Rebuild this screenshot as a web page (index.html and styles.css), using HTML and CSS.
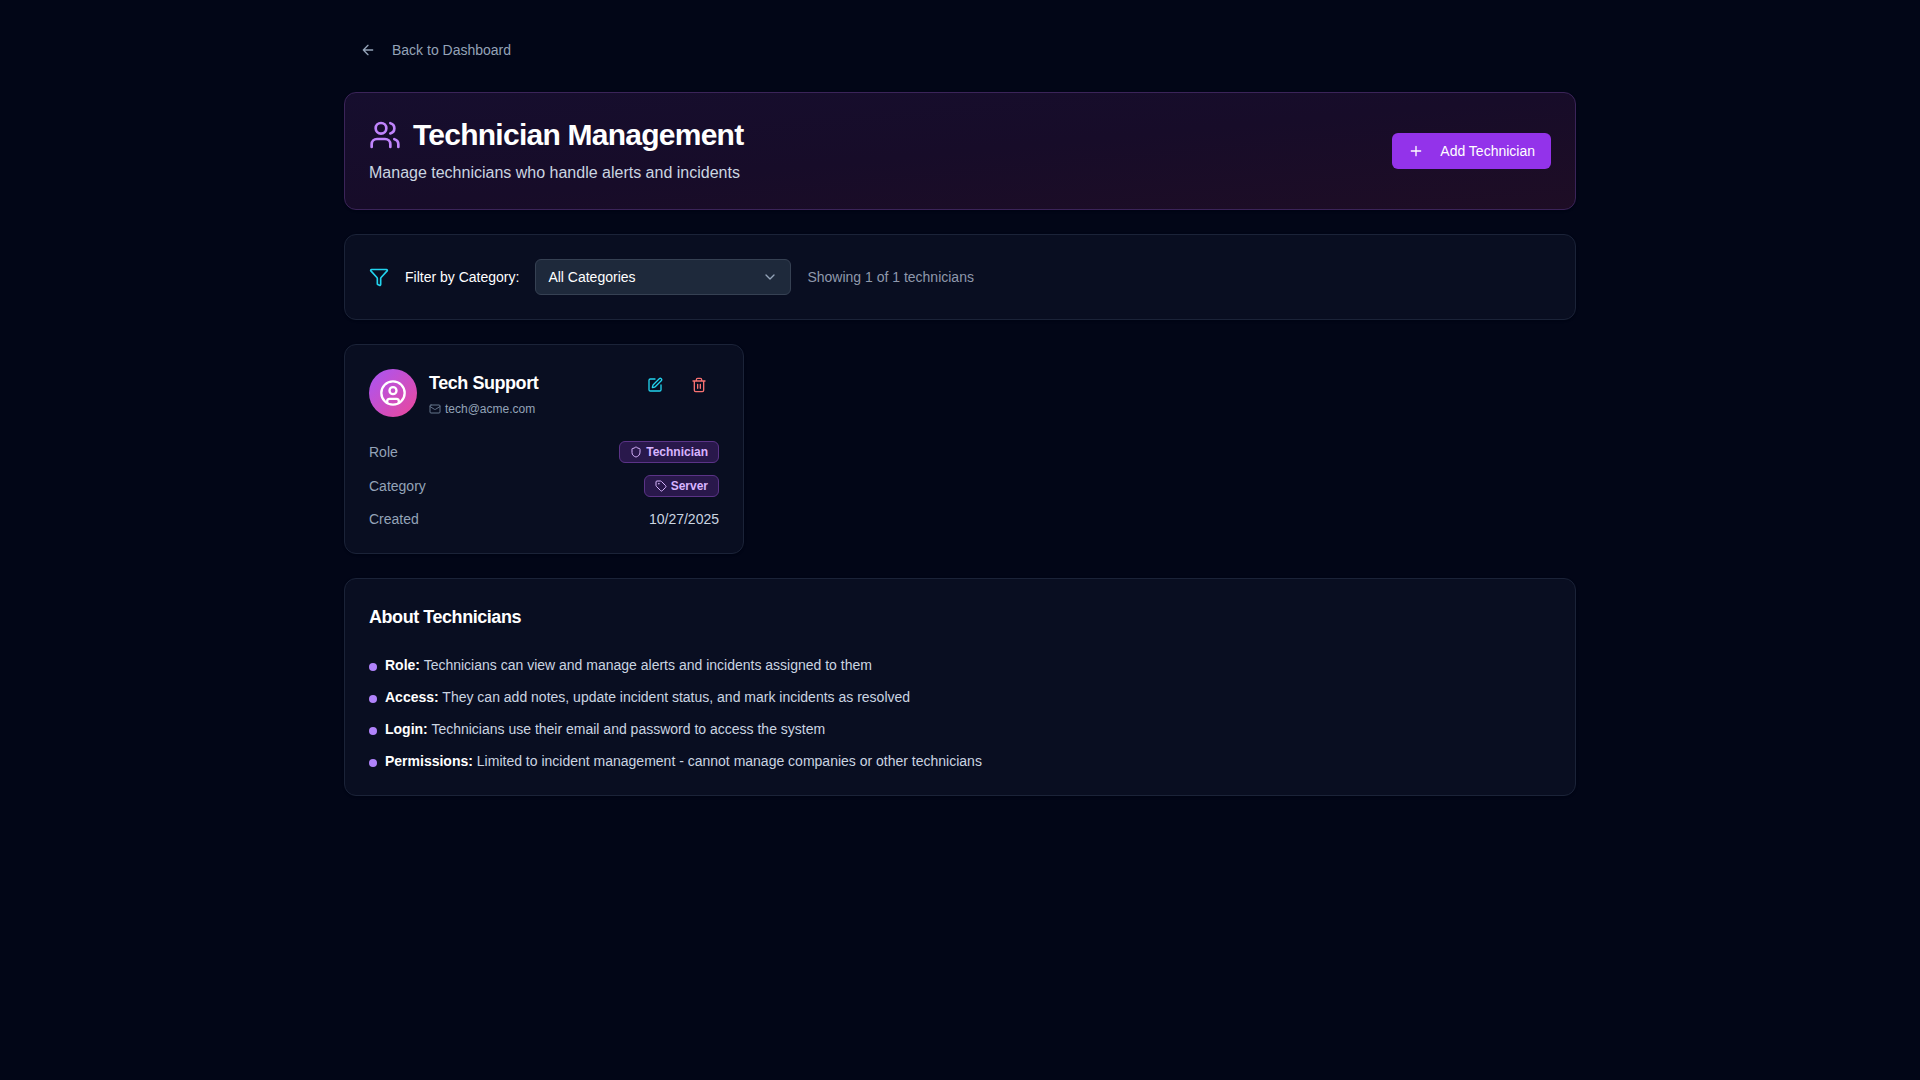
FILE: index.html
```html
<!DOCTYPE html>
<html lang="en">
<head>
<meta charset="utf-8">
<title>Technician Management</title>
<link rel="stylesheet" href="styles.css">
</head>
<body>
<main class="page">
  <a class="btn back"><svg class="i16" viewBox="0 0 24 24"><path d="m12 19-7-7 7-7M19 12H5"/></svg>Back to Dashboard</a>

  <header class="card hero">
    <div>
      <h1><svg class="i32" viewBox="0 0 24 24"><path d="M16 21v-2a4 4 0 0 0-4-4H6a4 4 0 0 0-4 4v2"/><circle cx="9" cy="7" r="4"/><path d="M22 21v-2a4 4 0 0 0-3-3.87M16 3.13a4 4 0 0 1 0 7.75"/></svg>Technician Management</h1>
      <p>Manage technicians who handle alerts and incidents</p>
    </div>
    <button class="btn add"><svg class="i16" viewBox="0 0 24 24"><path d="M5 12h14M12 5v14"/></svg>Add Technician</button>
  </header>

  <section class="card filter">
    <svg class="i20 cyan" viewBox="0 0 24 24"><path d="M10 20a1 1 0 0 0 .553.895l2 1A1 1 0 0 0 14 21v-7a2 2 0 0 1 .517-1.341L21.74 4.67A1 1 0 0 0 21 3H3a1 1 0 0 0-.742 1.67l7.225 7.989A2 2 0 0 1 10 14z"/></svg>
    <span class="label">Filter by Category:</span>
    <div class="select">All Categories<svg class="i16" viewBox="0 0 24 24"><path d="m6 9 6 6 6-6"/></svg></div>
    <span class="count">Showing 1 of 1 technicians</span>
  </section>

  <section class="grid">
    <article class="card">
      <div class="person">
        <div class="avatar"><svg class="i28" viewBox="0 0 24 24"><circle cx="12" cy="12" r="10"/><circle cx="12" cy="10" r="3"/><path d="M7 20.662V19a2 2 0 0 1 2-2h6a2 2 0 0 1 2 2v1.662"/></svg></div>
        <div class="who">
          <h2>Tech Support</h2>
          <div class="mail"><svg class="i12" viewBox="0 0 24 24"><rect x="2" y="4" width="20" height="16" rx="2"/><path d="m22 7-8.97 5.7a1.94 1.94 0 0 1-2.06 0L2 7"/></svg>tech@acme.com</div>
        </div>
        <div class="actions">
          <button class="icon-btn cyan"><svg class="i16" viewBox="0 0 24 24"><path d="M12 3H5a2 2 0 0 0-2 2v14a2 2 0 0 0 2 2h14a2 2 0 0 0 2-2v-7"/><path d="M18.375 2.625a1 1 0 0 1 3 3l-9.013 9.014a2 2 0 0 1-.853.505l-2.873.84a.5.5 0 0 1-.62-.62l.84-2.873a2 2 0 0 1 .506-.852z"/></svg></button>
          <button class="icon-btn red"><svg class="i16" viewBox="0 0 24 24"><path d="M3 6h18M19 6v14a2 2 0 0 1-2 2H7a2 2 0 0 1-2-2V6M8 6V4a2 2 0 0 1 2-2h4a2 2 0 0 1 2 2v2M10 11v6M14 11v6"/></svg></button>
        </div>
      </div>
      <dl class="facts">
        <div><dt>Role</dt><dd class="badge"><svg class="i12" viewBox="0 0 24 24"><path d="M20 13c0 5-3.5 7.5-7.66 8.95a1 1 0 0 1-.67-.01C7.5 20.5 4 18 4 13V6a1 1 0 0 1 1-1c2 0 4.5-1.2 6.24-2.72a1.17 1.17 0 0 1 1.52 0C14.51 3.81 17 5 19 5a1 1 0 0 1 1 1z"/></svg>Technician</dd></div>
        <div><dt>Category</dt><dd class="badge"><svg class="i12" viewBox="0 0 24 24"><path d="M12.586 2.586A2 2 0 0 0 11.172 2H4a2 2 0 0 0-2 2v7.172a2 2 0 0 0 .586 1.414l8.704 8.704a2.426 2.426 0 0 0 3.42 0l6.58-6.58a2.426 2.426 0 0 0 0-3.42z"/><circle cx="7.5" cy="7.5" r=".5"/></svg>Server</dd></div>
        <div><dt>Created</dt><dd>10/27/2025</dd></div>
      </dl>
    </article>
  </section>

  <section class="card about">
    <h2>About Technicians</h2>
    <ul>
      <li><span><b>Role:</b> Technicians can view and manage alerts and incidents assigned to them</span></li>
      <li><span><b>Access:</b> They can add notes, update incident status, and mark incidents as resolved</span></li>
      <li><span><b>Login:</b> Technicians use their email and password to access the system</span></li>
      <li><span><b>Permissions:</b> Limited to incident management - cannot manage companies or other technicians</span></li>
    </ul>
  </section>
</main>
</body>
</html>
```
FILE: styles.css
```css
* { box-sizing: border-box; margin: 0; padding: 0; }
body {
  min-height: 100vh;
  background: #020617;
  color: #fff;
  font: 14px/20px "Liberation Sans", Arial, sans-serif;
}
svg { fill: none; stroke: currentColor; stroke-width: 2; stroke-linecap: round; stroke-linejoin: round; flex: none; }
.i12 { width: 12px; height: 12px; }
.i16 { width: 16px; height: 16px; }
.i20 { width: 20px; height: 20px; }
.i28 { width: 28px; height: 28px; }
.i32 { width: 32px; height: 32px; }
.cyan { color: #22d3ee; }
.red { color: #f87171; }

.page {
  width: 1232px;
  margin: 0 auto;
  padding-top: 32px;
  display: flex;
  flex-direction: column;
  gap: 24px;
}
.btn {
  display: inline-flex;
  align-items: center;
  gap: 16px;
  height: 36px;
  padding: 0 16px;
  border: 0;
  border-radius: 6px;
  font: inherit;
}
.back { align-self: flex-start; color: #94a3b8; }
.add { background: #9333ea; color: #fff; }

.card {
  padding: 24px;
  border: 1px solid #1b2338;
  border-radius: 12px;
  background: #090e21;
  box-shadow: 0 1px 3px rgba(0, 0, 0, 0.1), 0 1px 2px -1px rgba(0, 0, 0, 0.1);
}
.hero {
  display: flex;
  align-items: center;
  justify-content: space-between;
  border-color: #3b2459;
  background: linear-gradient(to bottom right, #160e2e, #170c29 50%, #1e0d25);
}
h1 {
  display: flex;
  align-items: center;
  gap: 12px;
  margin-bottom: 8px;
  font-size: 30px;
  line-height: 36px;
  letter-spacing: -0.75px;
}
h1 svg { color: #c084fc; }
.hero p { font-size: 16px; line-height: 24px; color: #cbd5e1; }

.filter { display: flex; align-items: center; gap: 16px; }
.select {
  display: flex;
  align-items: center;
  justify-content: space-between;
  width: 256px;
  height: 36px;
  padding: 0 12px;
  border: 1px solid #364153;
  border-radius: 6px;
  background: #1e293b;
}
.select svg { color: #94a3b8; }
.count { color: #8f99ac; }

.grid { display: grid; grid-template-columns: repeat(3, 1fr); gap: 16px; }
.person { display: flex; gap: 12px; }
.avatar {
  display: grid;
  place-items: center;
  width: 48px;
  height: 48px;
  border-radius: 50%;
  background: linear-gradient(to bottom right, #a855f7, #ec4899);
}
h2 { font-size: 18px; line-height: 28px; letter-spacing: -0.45px; }
.mail { display: flex; align-items: center; gap: 4px; margin-top: 4px; font-size: 12px; line-height: 16px; color: #94a3b8; }
.mail svg { color: #64748b; }
.actions { display: flex; gap: 4px; margin-left: auto; }
.icon-btn { display: grid; place-items: center; width: 40px; height: 32px; border: 0; background: none; }
.facts { display: flex; flex-direction: column; gap: 12px; margin-top: 24px; }
.facts > div { display: flex; align-items: center; justify-content: space-between; }
dt { color: #94a3b8; }
dd { color: #cbd5e1; }
.badge {
  display: flex;
  align-items: center;
  gap: 4px;
  padding: 2px 10px;
  border: 1px solid #5b3387;
  border-radius: 6px;
  background: #29184b;
  color: #d8b4fe;
  font-size: 12px;
  font-weight: 700;
  line-height: 16px;
}

.about ul { display: flex; flex-direction: column; gap: 12px; margin-top: 24px; list-style: none; }
.about li { display: flex; gap: 8px; color: #cbd5e1; }
.about li::before { content: ""; width: 8px; height: 8px; margin-top: 8px; border-radius: 50%; background: #b083fb; }
.about b { color: #fff; }
```
